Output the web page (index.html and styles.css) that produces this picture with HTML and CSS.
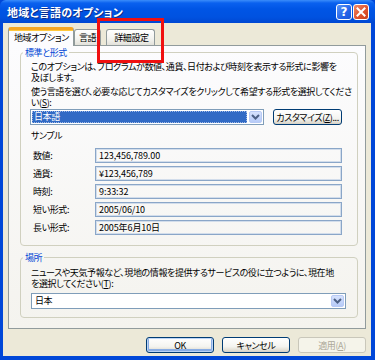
FILE: index.html
```html
<!DOCTYPE html>
<html lang="ja">
<head>
<meta charset="utf-8">
<link rel="stylesheet" href="styles.css">
</head>
<body>
<div class="window">
  <div class="titlebar">
    <span class="title">地域と言語のオプション</span>
    <div class="tbtns">
      <span class="tb help">?</span>
      <span class="tb close"><svg width="10" height="10" viewBox="0 0 10 10"><path d="M1.5 1.5 L8.5 8.5 M8.5 1.5 L1.5 8.5" stroke="#fff" stroke-width="2" stroke-linecap="square"/></svg></span>
    </div>
  </div>
  <div class="client">
    <div class="tabs">
      <div class="tab active">地域オプション</div>
      <div class="tab">言語</div>
      <div class="tab t3">詳細設定</div>
    </div>
    <div class="panel">
      <fieldset class="group g1">
        <legend>標準と形式</legend>
        <p class="txt">このオプションは、プログラムが数値、通貨、日付および時刻を表示する形式に影響を<br>及ぼします。</p>
        <p class="txt p2">使う言語を選び、必要な応じてカスタマイズをクリックして希望する形式を選択してくださ<br>い(<u>S</u>):</p>
        <div class="selrow">
          <div class="combo c1">
            <span class="val selected">日本語</span>
            <span class="arrow"><svg width="9" height="6" viewBox="0 0 9 6"><path d="M1 1 L4.5 4.5 L8 1" fill="none" stroke="#4D6185" stroke-width="2"/></svg></span>
          </div>
          <span class="btn custom">カスタマイズ(<u>Z</u>)...</span>
        </div>
        <div class="sample-title">サンプル</div>
        <div class="samples">
          <div class="srow"><span class="lab">数値:</span><span class="field">123,456,789.00</span></div>
          <div class="srow"><span class="lab">通貨:</span><span class="field">¥123,456,789</span></div>
          <div class="srow"><span class="lab">時刻:</span><span class="field">9:33:32</span></div>
          <div class="srow"><span class="lab">短い形式:</span><span class="field">2005/06/10</span></div>
          <div class="srow"><span class="lab">長い形式:</span><span class="field">2005年6月10日</span></div>
        </div>
      </fieldset>
      <fieldset class="group g2">
        <legend>場所</legend>
        <p class="txt">ニュースや天気予報など、現地の情報を提供するサービスの役に立つように、現在地<br>を選択してください(<u>T</u>):</p>
        <div class="combo c2">
          <span class="val">日本</span>
          <span class="arrow"><svg width="9" height="6" viewBox="0 0 9 6"><path d="M1 1 L4.5 4.5 L8 1" fill="none" stroke="#4D6185" stroke-width="2"/></svg></span>
        </div>
      </fieldset>
    </div>
    <div class="buttons">
      <span class="btn ok">OK</span>
      <span class="btn">キャンセル</span>
      <span class="btn disabled">適用(<u>A</u>)</span>
    </div>
  </div>
  <div class="redbox"></div>
</div>
</body>
</html>
```
FILE: styles.css
```css
* { box-sizing: border-box; }
html, body { margin: 0; padding: 0; }
body {
  font-family: "Noto Sans CJK JP", "Noto Sans", sans-serif;
  font-size: 9px;
  letter-spacing: -0.4px;
  font-feature-settings: "palt";
  color: #000;
  background: #fff;
}
.window {
  position: relative;
  width: 375px;
  height: 360px;
  background: #0047D8;
  display: flex;
  flex-direction: column;
}
.titlebar {
  height: 23px;
  flex: none;
  display: flex;
  align-items: center;
  justify-content: space-between;
  padding: 0 6px 0 7px;
  background: linear-gradient(#3B8DFA 0, #0A61EF 3px, #0055E5 9px, #0052E0 17px, #0047D2 23px);
  border-radius: 6px 6px 0 0;
}
.title {
  color: #fff;
  font-weight: bold;
  font-size: 11px;
  text-shadow: 1px 1px 0 #0A2E8C;
  letter-spacing: 0.2px;
}
.tbtns { display: flex; gap: 1px; margin-top: 1px; }
.tb {
  width: 16px;
  height: 16px;
  border: 1px solid #fff;
  border-radius: 3px;
  display: flex;
  align-items: center;
  justify-content: center;
  color: #fff;
  font-family: "DejaVu Sans", sans-serif;
  font-weight: bold;
  font-size: 12px;
  letter-spacing: 0;
  line-height: 1;
}
.help { background: linear-gradient(135deg, #5B96F8, #2463E8 60%, #1C55D8); }
.close { background: linear-gradient(135deg, #EE8A6A, #E0532E 55%, #C8401C); }
.client {
  flex: 1;
  margin: 0 4px 4px 3px;
  background: #ECE9D8;
  padding: 4px 5px 0 5px;
  display: flex;
  flex-direction: column;
}
.tabs {
  display: flex;
  align-items: flex-end;
  height: 18px;
  position: relative;
  z-index: 2;
}
.tab {
  height: 16px;
  padding: 0 4px;
  border: 1px solid #919B9C;
  border-bottom: none;
  border-radius: 3px 3px 0 0;
  background: linear-gradient(#FFFFFF, #F3F3EF 60%, #E2E1DA);
  line-height: 15px;
  white-space: nowrap;
}
.tab.active {
  height: 19px;
  margin-bottom: -1px;
  padding: 0 4px 0 5px;
  width: 66px;
  background: #FCFCFE;
  border-top: 3px solid #F5A623;
  box-shadow: inset 0 1px 0 #FFC83C;
  line-height: 15px;
}
.tab.t3 { margin-left: 5px; width: 49px; padding-left: 7px; }
.panel {
  height: 284px;
  flex: none;
  border: 1px solid #919B9C;
  background: linear-gradient(#FCFCFE, #F4F3EE);
  display: flex;
  flex-direction: column;
}
.group {
  margin: 1px 7px 0 11px;
  padding: 3px 6px 10px 10px;
  border: 1px solid #D0D0BF;
  border-radius: 4px;
  min-inline-size: 0;
}
.group legend {
  color: #0046D5;
  padding: 0 2px;
  margin-left: -8px;
  line-height: 11px;
}
.g2 { margin-top: 6px; padding-top: 4px; padding-bottom: 8px; }
.txt {
  margin: 0;
  line-height: 11px;
  white-space: nowrap;
}
.p2 { margin-top: 3px; }
.selrow {
  margin-top: 1px;
  display: flex;
  gap: 9px;
  align-items: center;
}
.combo {
  height: 16px;
  border: 1px solid #7F9DB9;
  background: #fff;
  display: flex;
  align-items: stretch;
  padding: 1px;
}
.c1 { width: 234px; margin-left: -1px; }
.c2 { width: 315px; margin-top: 4px; }
.val {
  flex: 1;
  line-height: 12px;
  padding-left: 2px;
  margin-right: 2px;
}
.val.selected {
  background: #316AC5;
  color: #fff;
  outline: 1px dotted #9EB8E6;
  outline-offset: -1px;
}
.arrow {
  width: 13px;
  flex: none;
  border: 1px solid #B8CAF5;
  border-radius: 2px;
  background: linear-gradient(#D6E2FD, #B7CBF8);
  display: flex;
  align-items: center;
  justify-content: center;
}
.btn {
  height: 16px;
  border: 1px solid #003C74;
  border-radius: 3px;
  background: linear-gradient(#FFFFFF, #F4F4F0 60%, #E3E0D6 85%, #D6D0C5);
  display: flex;
  align-items: center;
  justify-content: center;
  white-space: nowrap;
  line-height: 1;
}
.custom { width: 69px; }
.sample-title { margin-top: 5px; line-height: 11px; }
.samples {
  margin-top: 7px;
  display: flex;
  flex-direction: column;
  gap: 3px;
}
.srow { display: flex; align-items: center; }
.lab { width: 64px; padding-left: 2px; }
.field {
  width: 247px;
  height: 15px;
  border: 1px solid #8AA6C8;
  box-shadow: inset 0 0 0 1px #D2DDEB;
  padding-left: 3px;
  line-height: 13px;
  letter-spacing: -0.1px;
}
.buttons {
  margin-top: 8px;
  display: flex;
  justify-content: flex-end;
  gap: 8px;
}
.buttons .btn { width: 68px; }
.ok { box-shadow: inset 0 0 0 1px #BCD4F6, inset 0 -1px 0 2px #89ADE4; }
.disabled {
  border-color: #C9C7BA;
  color: #ACA899;
  background: #F5F4EA;
}
.redbox {
  position: absolute;
  left: 97px;
  top: 18px;
  width: 67px;
  height: 45px;
  border: 3px solid #F01010;
  z-index: 5;
}
```
